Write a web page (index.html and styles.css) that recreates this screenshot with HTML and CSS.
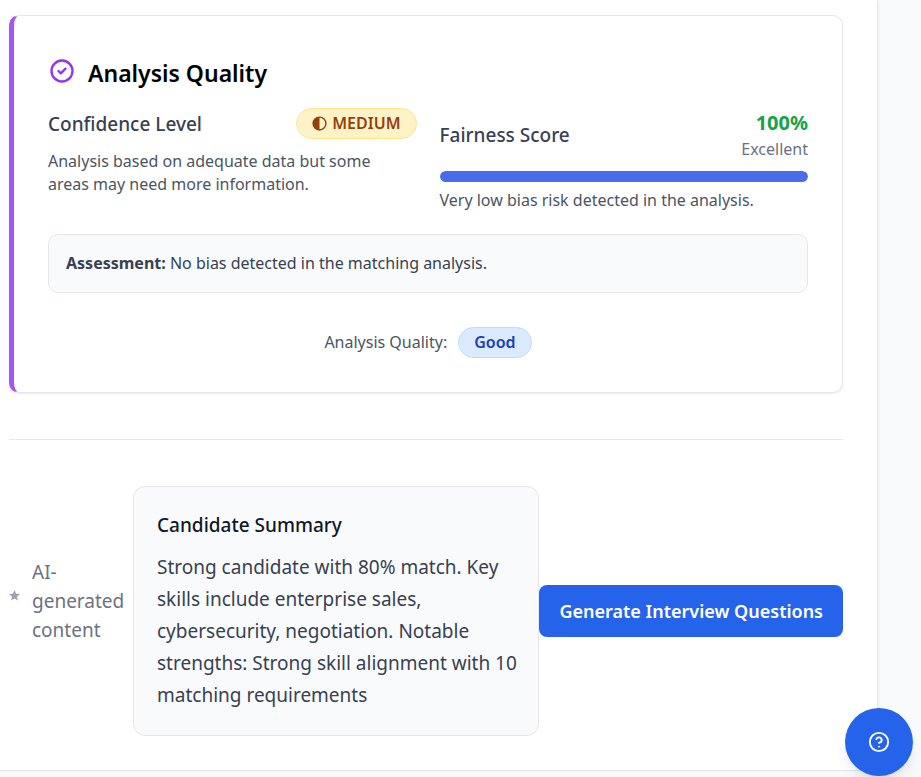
FILE: index.html
```html
<!DOCTYPE html>
<html lang="en">
<head>
<meta charset="utf-8">
<meta name="viewport" content="width=device-width, initial-scale=1">
<title>Analysis Quality</title>
<link rel="stylesheet" href="styles.css">
</head>
<body>
<main class="panel">
  <section class="card">
    <h2 class="card-title">
      <svg class="title-icon" viewBox="0 0 24 24" fill="none" stroke="currentColor" stroke-width="2" stroke-linecap="round" stroke-linejoin="round" aria-hidden="true"><path d="M9 12l2 2 4-4m6 2a9 9 0 11-18 0 9 9 0 0118 0z"/></svg>
      Analysis Quality
    </h2>
    <div class="metrics">
      <div class="metric">
        <div class="metric-head">
          <h3 class="metric-name">Confidence Level</h3>
          <span class="pill pill-medium"><svg class="half-icon" viewBox="0 0 14 14" aria-hidden="true"><circle cx="7" cy="7" r="6" fill="none" stroke="currentColor" stroke-width="1.3"/><path d="M7 1a6 6 0 0 0 0 12z" fill="currentColor"/></svg>MEDIUM</span>
        </div>
        <p class="note note-spaced">Analysis based on adequate data but some areas may need more information.</p>
      </div>
      <div class="metric">
        <div class="metric-head">
          <h3 class="metric-name">Fairness Score</h3>
          <div class="score">
            <div class="score-value">100%</div>
            <div class="score-label">Excellent</div>
          </div>
        </div>
        <div class="track" role="progressbar" aria-label="Fairness Score" aria-valuenow="100" aria-valuemin="0" aria-valuemax="100"><div class="fill" style="width:100%"></div></div>
        <p class="note">Very low bias risk detected in the analysis.</p>
      </div>
    </div>
    <p class="assessment"><strong>Assessment:</strong> No bias detected in the matching analysis.</p>
    <div class="overall"><span>Analysis Quality:</span><span class="pill pill-good">Good</span></div>
  </section>

  <footer class="actions">
    <div class="generated">
      <svg class="star" viewBox="0 0 20 20" fill="currentColor" aria-hidden="true"><path d="M10 0l2.8 6.7 7.2.6-5.5 4.8 1.7 7.1L10 15.4l-6.2 3.8 1.7-7.1L0 7.300l7.200-.6z"/></svg>
      <span>AI-generated content</span>
    </div>
    <section class="summary">
      <h3 class="summary-title">Candidate Summary</h3>
      <p class="summary-text">Strong candidate with 80% match. Key skills include enterprise sales, cybersecurity, negotiation. Notable strengths: Strong skill alignment with 10 matching requirements</p>
    </section>
    <button class="generate" type="button">Generate Interview Questions</button>
  </footer>
</main>
<button class="help" type="button" aria-label="Help">
  <svg class="help-icon" viewBox="0 0 24 24" fill="none" stroke="currentColor" stroke-width="2" stroke-linecap="round" stroke-linejoin="round" aria-hidden="true"><circle cx="12" cy="12" r="10"/><path d="M9.090 9a3 3 0 0 1 5.830 1c0 2-3 3-3 3"/><path d="M12 17h.01"/></svg>
</button>
</body>
</html>
```
FILE: styles.css
```css
* { box-sizing: border-box; }

body {
  margin: 0;
  background: #f9fafb;
  color: #374151;
  font-family: "Segoe UI", "Noto Sans", sans-serif;
  font-size: 16px;
  line-height: 23px;
}

h2, h3, p { margin: 0; }

.panel {
  margin-right: 43px;
  padding: 15px 34px 34px 9px;
  background: #fff;
  border: solid #e5e7eb;
  border-width: 0 1px 1px 0;
  box-shadow: 0 1px 3px rgba(0, 0, 0, .1);
}

.card {
  padding: 41px 34px 34px;
  border: 1px solid #e5e7eb;
  border-left: 5px solid #a855f7;
  border-radius: 10px;
  box-shadow: 0 1px 2px rgba(0, 0, 0, .08);
}

.card-title {
  display: flex;
  align-items: flex-start;
  gap: 12px;
  color: #000;
  font-size: 23px;
  font-weight: 600;
  line-height: 32px;
}

.title-icon { width: 28px; height: 28px; color: #9333ea; }

.metrics {
  display: grid;
  grid-template-columns: 1fr 1fr;
  gap: 23px;
  margin-top: 19px;
}

.metric-head {
  display: flex;
  align-items: center;
  justify-content: space-between;
}

.metric-name { font-size: 19px; font-weight: 500; line-height: 28px; }

.pill {
  display: inline-flex;
  align-items: center;
  gap: 5px;
  padding: 3px 15px;
  border: 1px solid;
  border-radius: 16px;
  font-weight: 600;
}

.pill-medium { background: #fef3c7; border-color: #fde68a; color: #92400e; }
.pill-good { background: #dbeafe; border-color: #bfdbfe; color: #1e40af; }

.half-icon { width: 15px; height: 15px; }

.note { color: #4b5563; }
.note-spaced { margin-top: 11px; padding-right: 23px; }

.score { text-align: right; }
.score-value { color: #16a34a; font-size: 20px; font-weight: 700; line-height: 30px; }
.score-label { color: #6b7280; }

.track {
  height: 11px;
  margin: 10px 0 7px;
  overflow: hidden;
  background: #e5e7eb;
  border-radius: 6px;
}

.fill { height: 100%; background: #476dea; border-radius: 6px; }

.assessment {
  margin-top: 22px;
  padding: 17px;
  background: #f9fafb;
  border: 1px solid #e5e7eb;
  border-radius: 10px;
}

.overall {
  display: flex;
  align-items: center;
  justify-content: center;
  gap: 11px;
  margin-top: 34px;
  color: #4b5563;
}

.actions {
  display: flex;
  align-items: center;
  justify-content: space-between;
  margin-top: 46px;
  padding-top: 46px;
  border-top: 1px solid #e5e7eb;
}

.generated {
  display: flex;
  flex: 0 0 124px;
  align-items: center;
  gap: 12px;
  margin-bottom: 20px;
  color: #6b7280;
  font-size: 19px;
  line-height: 29px;
}

.star {
  flex: none;
  width: 11px;
  height: 11px;
  margin-bottom: 12px;
  color: #9ca3af;
}

.summary {
  flex: 1;
  padding: 24px 20px 24px 23px;
  background: #f9fafb;
  border: 1px solid #e5e7eb;
  border-radius: 12px;
}

.summary-title { color: #111827; font-size: 19px; font-weight: 500; line-height: 29px; }
.summary-text { margin-top: 11px; font-size: 19px; line-height: 32px; }

.generate {
  flex: none;
  padding: 12px 20px;
  background: #2563eb;
  border: 0;
  border-radius: 8px;
  color: #fff;
  font: inherit;
  font-size: 18px;
  font-weight: 600;
  line-height: 28px;
}

.help {
  position: fixed;
  right: 8px;
  bottom: 1px;
  display: flex;
  align-items: center;
  justify-content: center;
  width: 68px;
  height: 68px;
  padding: 0;
  background: #2563eb;
  border: 0;
  border-radius: 50%;
  box-shadow: 0 10px 15px -3px rgba(0, 0, 0, .1), 0 4px 6px -4px rgba(0, 0, 0, .1);
  color: #fff;
}

.help-icon { width: 22px; height: 22px; }
```
